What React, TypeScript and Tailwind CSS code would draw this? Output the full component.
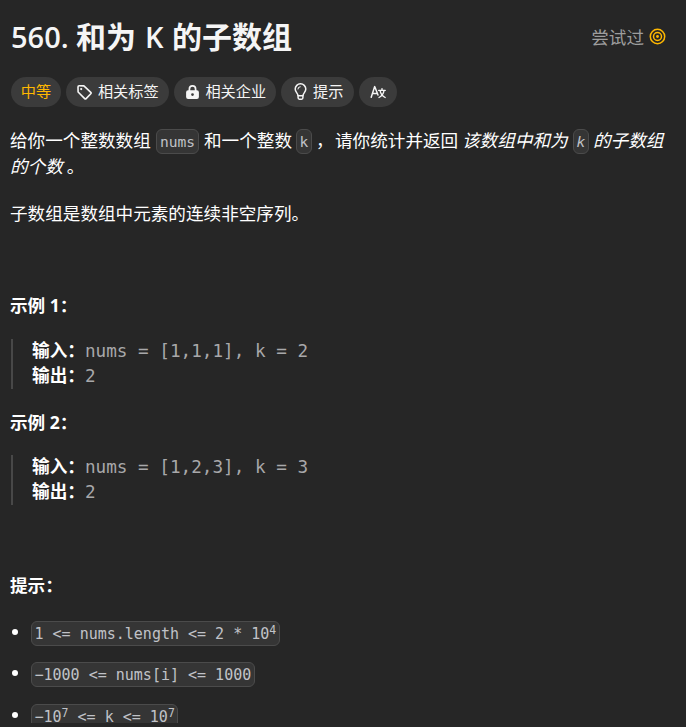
import type { ReactNode } from "react";

const TagIcon = () => (
  <svg viewBox="0 0 17 17" className="h-[17px] w-[17px] shrink-0" fill="none" stroke="currentColor" strokeWidth="1.6" strokeLinejoin="round">
    <path d="M2 2.9 Q2 1.8 3.1 1.8 L7.9 1.9 L14.8 8.3 Q15.5 9 14.8 9.7 L10.1 14.6 Q9.4 15.3 8.7 14.6 L2.1 8 Z" />
    <circle cx="5.2" cy="5.1" r="1.1" fill="currentColor" stroke="none" />
  </svg>
);

const LockIcon = () => (
  <svg viewBox="0 0 17 17" className="h-[17px] w-[17px] shrink-0" fill="none">
    <path d="M5.4 7.2 V4.9 a3.1 3.1 0 0 1 6.2 0 V7.2" stroke="currentColor" strokeWidth="1.7" />
    <path fill="currentColor" fillRule="evenodd" d="M4.1 6.2 h8.8 a2 2 0 0 1 2 2 v4.9 a2 2 0 0 1 -2 2 h-8.8 a2 2 0 0 1 -2 -2 V8.2 a2 2 0 0 1 2 -2z M8.5 9.2 a1.4 1.4 0 1 0 .01 2.8 a1.4 1.4 0 1 0 -.01 -2.8z" />
  </svg>
);

const BulbIcon = () => (
  <svg viewBox="0 0 17 18" className="h-[18px] w-[17px] shrink-0" fill="none" stroke="currentColor" strokeWidth="1.5" strokeLinecap="round">
    <path d="M6 12.6 C6 10.2 3.2 9.4 3.2 6.1 a5.3 5.3 0 0 1 10.6 0 C13.8 9.4 11 10.2 11 12.6" strokeLinejoin="round" />
    <path d="M6.1 12.8 H10.9 V14.8 Q10.9 16.2 9.6 16.2 H7.4 Q6.1 16.2 6.1 14.8 Z" />
    <path d="M6 6 Q6.2 4 8.2 3.7" strokeWidth="1.1" />
  </svg>
);

const TranslateIcon = () => (
  <svg viewBox="0 0 17 17" className="h-[17px] w-[17px] shrink-0" fill="none" stroke="currentColor" strokeWidth="1.5" strokeLinecap="round" strokeLinejoin="round">
    <path d="M1.2 13.2 L4.7 2.6 L8 11 M2.6 9.6 H7.2" />
    <path d="M8.7 6.4 H15.2 M12 4.6 V6 M14 6.6 C13.5 9.6 11.8 12 9 13.5 M10.1 6.6 C10.6 9.6 12.4 12 15.2 13.5" strokeWidth="1.4" />
  </svg>
);

const AttemptedIcon = () => (
  <svg viewBox="0 0 17 17" className="h-[17px] w-[17px]" fill="none" stroke="currentColor" strokeWidth="1.5">
    <circle cx="8.5" cy="8.5" r="7.2" />
    <circle cx="8.5" cy="8.5" r="4" />
    <circle cx="8.5" cy="8.5" r="1.4" fill="currentColor" stroke="none" />
  </svg>
);

const Pill = ({ width, children }: { width: string; children: ReactNode }) => (
  <div className={`flex h-[30px] shrink-0 items-center justify-center gap-[4.5px] rounded-full bg-[#3b3b3b] text-[15.2px] leading-none text-[#f5f5f5] ${width}`}>{children}</div>
);

const Code = ({ children, className = "" }: { children: ReactNode; className?: string }) => (
  <code className={`inline-block rounded-[6px] border border-[#4b4b4b] bg-[#353535] font-['DejaVu_Sans_Mono',monospace] text-[#c0c2c7] ${className}`}>{children}</code>
);

const Example = ({ input, output }: { input: string; output: string }) => (
  <div className="h-[50px] border-l-2 border-[#484848] pl-[19px] font-['DejaVu_Sans_Mono','Noto_Sans_CJK_SC',monospace] text-[17.65px] leading-[25px] whitespace-pre text-[#a8a8aa]">
    <div className="flex h-[25px]">
      <b className="w-[53px] text-white">输入：</b>
      <span>{input}</span>
    </div>
    <div className="flex h-[25px]">
      <b className="w-[53px] text-white">输出：</b>
      <span>{output}</span>
    </div>
  </div>
);

const Constraint = ({ width, children }: { width: string; children: ReactNode }) => (
  <li className="flex h-[41.5px] items-start">
    <span className="mt-[8px] mr-[13px] ml-[1px] h-[6px] w-[6px] shrink-0 rounded-full bg-white" />
    <Code className={`h-[25px] pl-[2.5px] text-[15px] leading-[24px] whitespace-pre ${width}`}>{children}</Code>
  </li>
);

const Sup = ({ children }: { children: ReactNode }) => (
  <sup className="top-[-5px] text-[11.5px]">{children}</sup>
);

export default function App() {
  return (
    <div className="h-[727px] w-[686px] overflow-hidden bg-[#262626] font-['Open_Sans','Noto_Sans_CJK_SC',sans-serif] text-[17.6px] text-[#f5f5f5]">
      <main className="h-[723px] overflow-hidden pl-[11px]">
        <header className="flex h-[77px] justify-between pt-[18px] pr-[20px]">
          <h1 className="mt-[-1px] flex h-[40px] items-baseline text-[30px] leading-[40px] font-bold whitespace-pre">
            <span className="w-[65px] text-[29px] font-semibold">560.</span>
            <span className="w-[69px]">和为</span>
            <span className="w-[27px] text-[29px] font-semibold">K</span>
            <span>的子数组</span>
          </h1>
          <div className="flex h-[38px] items-center gap-[5px] text-[#9d9d9d]">
            <span>尝试过</span>
            <span className="mt-[-1px] text-[#ffb800]"><AttemptedIcon /></span>
          </div>
        </header>
        <div className="flex h-[30px] gap-[5px]">
          <Pill width="w-[50px]"><span className="text-[#ffb800]">中等</span></Pill>
          <Pill width="w-[103px]"><TagIcon /><span>相关标签</span></Pill>
          <Pill width="w-[102px]"><LockIcon /><span>相关企业</span></Pill>
          <Pill width="w-[73px]"><BulbIcon /><span>提示</span></Pill>
          <Pill width="w-[38px]"><TranslateIcon /></Pill>
        </div>
        <div className="ml-[-1px]">
          <section className="mt-[20px] h-[52.5px] text-white">
            <div className="flex h-[26px] items-center whitespace-nowrap">
              <span className="w-[146px]">给你一个整数数组</span>
              <Code className="mt-[2px] h-[25px] w-[43px] text-center text-[14.6px] leading-[24px]">nums</Code>
              <span className="ml-[5px] w-[92px]">和一个整数</span>
              <Code className="mt-[2px] h-[25px] w-[16px] text-center text-[14.6px] leading-[24px]">k</Code>
              <span className="ml-[4px] w-[19px]">，</span>
              <span className="w-[127px]">请你统计并返回</span>
              <em className="w-[111px]">该数组中和为</em>
              <Code className="mt-[2px] h-[25px] w-[16px] text-center text-[14.6px] leading-[24px] italic">k</Code>
              <em className="ml-[4px]">的子数组</em>
            </div>
            <div className="flex h-[26px] items-center"><em>的个数</em><span className="ml-[4px]">。</span></div>
          </section>
          <p className="mt-[20px] h-[26px] leading-[26px] text-white">子数组是数组中元素的连续非空序列。</p>
          <h2 className="mt-[66px] h-[26px] leading-[26px] font-bold text-white">示例 1：</h2>
        </div>
        <div className="mt-[21.5px]"><Example input="nums = [1,1,1], k = 2" output="2" /></div>
        <h2 className="mt-[20px] ml-[-1px] h-[26px] leading-[26px] font-bold text-white">示例 2：</h2>
        <div className="mt-[20px]"><Example input="nums = [1,2,3], k = 3" output="2" /></div>
        <h2 className="mt-[66.5px] ml-[-1px] h-[26px] leading-[26px] font-bold text-white">提示：</h2>
        <ul className="mt-[23px]">
          <Constraint width="w-[249px]">{"1 <= nums.length <= 2 * 10"}<Sup>4</Sup></Constraint>
          <Constraint width="w-[224px]">{"−1000 <= nums[i] <= 1000"}</Constraint>
          <Constraint width="w-[147px]">{"−10"}<Sup>7</Sup>{" <= k <= 10"}<Sup>7</Sup></Constraint>
        </ul>
      </main>
    </div>
  );
}
